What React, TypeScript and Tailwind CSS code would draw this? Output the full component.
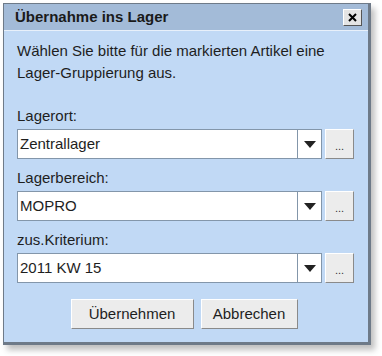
const font = { fontFamily: '"Liberation Sans", Arial, sans-serif' };

type RowProps = { label: string; value: string };

const SelectRow = ({ label, value }: RowProps) => (
  <div className="flex flex-col">
    <div className="h-[18px] text-[15px] leading-[18px] text-[#1e1e1e]">{label}</div>
    <div className="mt-[4px] flex h-[30px] items-stretch gap-[3px]">
      <div className="flex w-[305px] border border-[#8396aa] bg-white">
        <div className="flex flex-1 items-center pl-[2px] text-[15px] text-[#1e1e1e]">{value}</div>
        <div className="flex w-[24px] items-center justify-center border-l border-[#8396aa]">
          <svg width="12" height="7" viewBox="0 0 12 7">
            <path d="M0 0 H12 L6 7 Z" fill="#222" />
          </svg>
        </div>
      </div>
      <div className="flex w-[29px] items-end justify-center border border-t-white border-l-white border-r-[#8a8a8a] border-b-[#8a8a8a] bg-[#ececec] pb-[6px] text-[11px] leading-none text-[#333]">
        ...
      </div>
    </div>
  </div>
);

export default function App() {
  return (
    <div className="h-[356px] w-[382px] bg-white pl-[3px] pt-[3px]" style={font}>
      <div className="flex h-[342px] w-[368px] flex-col border border-[#6e7a88] border-r-[3px] border-b-[3px] shadow-[4px_5px_6px_rgba(0,0,0,0.25)]">
        <div className="flex h-[27px] items-center justify-between border-b border-[#e8f0fa] bg-[#a3bbd8] pl-[11px] pr-[6px]">
          <span className="text-[15px] font-bold text-[#1a1a1a]">Übernahme ins Lager</span>
          <div className="flex h-[17px] w-[19px] items-center justify-center border border-t-white border-l-white border-r-[#555] border-b-[#555] bg-[#e4e4e4]">
            <svg width="9" height="9" viewBox="0 0 9 9">
              <path d="M1 1 L8 8 M8 1 L1 8" stroke="#000" strokeWidth="2" />
            </svg>
          </div>
        </div>
        <div className="flex flex-1 flex-col bg-[#c1d9f5] px-[13px] pt-[9px]">
          <p className="text-[15px] leading-[22px] text-[#1e1e1e]">
            Wählen Sie bitte für die markierten Artikel eine Lager-Gruppierung aus.
          </p>
          <div className="mt-[23px] flex flex-col gap-[10px]">
            <SelectRow label="Lagerort:" value="Zentrallager" />
            <SelectRow label="Lagerbereich:" value="MOPRO" />
            <SelectRow label="zus.Kriterium:" value="2011 KW 15" />
          </div>
          <div className="mt-[16px] flex justify-center gap-[7px] pr-[4px]">
            <button className="h-[30px] w-[123px] border border-t-white border-l-white border-r-[#8a8a8a] border-b-[#8a8a8a] bg-[#ececec] text-[15px] text-[#1e1e1e]">
              Übernehmen
            </button>
            <button className="h-[30px] w-[97px] border border-t-white border-l-white border-r-[#8a8a8a] border-b-[#8a8a8a] bg-[#ececec] text-[15px] text-[#1e1e1e]">
              Abbrechen
            </button>
          </div>
        </div>
      </div>
    </div>
  );
}
